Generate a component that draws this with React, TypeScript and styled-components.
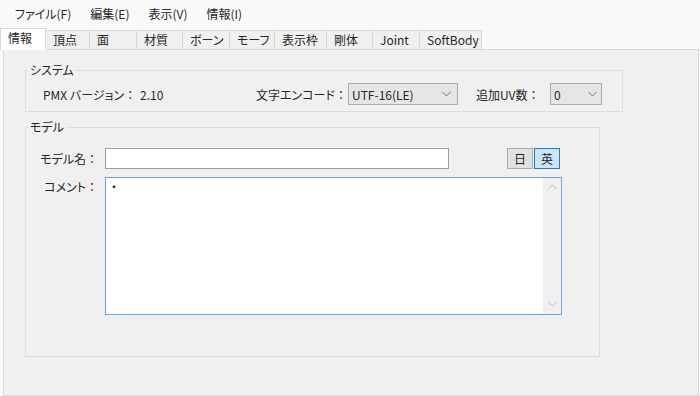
import React from 'react';
import styled, { createGlobalStyle } from 'styled-components';

const GlobalStyle = createGlobalStyle`
  html, body {
    margin: 0;
    padding: 0;
    background: #f9f9f9;
  }
  body {
    font-family: "Noto Sans CJK JP", "Noto Sans", sans-serif;
    font-size: 12px;
    color: #262626;
    font-feature-settings: "palt";
  }
`;

const Window = styled.div`
  width: 700px;
  height: 396px;
  display: flex;
  flex-direction: column;
  background: #f9f9f9;
  overflow: hidden;
`;

const MenuBar = styled.div`
  height: 28px;
  display: flex;
  align-items: center;
  padding-left: 5px;
`;

const MenuItem = styled.span`
  padding: 0 9px 0 10px;
  line-height: 20px;
`;

const TabStrip = styled.div`
  height: 21px;
  display: flex;
  align-items: flex-end;
`;

const Tab = styled.div<{ $w: number; $active?: boolean }>`
  box-sizing: border-box;
  width: ${(p) => p.$w}px;
  height: ${(p) => (p.$active ? 22 : 19)}px;
  margin-right: -1px;
  margin-bottom: ${(p) => (p.$active ? -1 : 0)}px;
  padding: ${(p) => (p.$active ? '1px 0 0 7px' : '1px 0 0 7px')};
  border: 1px solid #d9d9d9;
  border-bottom: none;
  background: ${(p) => (p.$active ? '#ffffff' : '#f0f0f0')};
  line-height: 16px;
  white-space: nowrap;
  position: relative;
  z-index: ${(p) => (p.$active ? 2 : 1)};
`;

const Panel = styled.div`
  flex: 1;
  box-sizing: border-box;
  width: 696px;
  margin-left: 3px;
  border: 1px solid #d9d9d9;
  background: #f0f0f0;
  padding: 12px 0 0 21px;
`;

const Group = styled.fieldset<{ $w: number; $gapTop?: number; $padBottom: number }>`
  box-sizing: border-box;
  width: ${(p) => p.$w}px;
  margin: ${(p) => p.$gapTop ?? 0}px 0 0 0;
  padding: 0 0 ${(p) => p.$padBottom}px 0;
  border: 1px solid #dcdcdc;
  min-width: 0;
`;

const Legend = styled.legend`
  margin-left: 2px;
  padding: 0 2px;
  line-height: 16px;
`;

const Colon = styled.span`
  font-feature-settings: normal;
`;

const SystemRow = styled.div`
  margin-top: 5px;
  height: 22px;
  padding-left: 17px;
  display: grid;
  grid-template-columns: 97px 116px 92px 110px 18px 74px 52px;
  align-items: center;
  white-space: nowrap;
`;

const Combo = styled.div<{ $padRight?: number }>`
  box-sizing: border-box;
  height: 22px;
  border: 1px solid #adadad;
  background: #e5e5e5;
  display: flex;
  align-items: center;
  justify-content: space-between;
  padding: 0 ${(p) => p.$padRight ?? 6}px 0 3px;
`;

const ModelGrid = styled.div`
  margin-top: 13px;
  display: grid;
  grid-template-columns: 72px 457px;
  column-gap: 7px;
  row-gap: 8px;
`;

const FieldLabel = styled.div<{ $top?: number }>`
  text-align: right;
  line-height: 16px;
  white-space: nowrap;
  padding-top: ${(p) => p.$top ?? 0}px;
  align-self: ${(p) => (p.$top !== undefined ? 'start' : 'center')};
`;

const NameLine = styled.div`
  display: flex;
  align-items: center;
  justify-content: space-between;
  padding-right: 2px;
`;

const TextBox = styled.div`
  box-sizing: border-box;
  width: 344px;
  height: 21px;
  border: 1px solid #9e9e9e;
  background: #ffffff;
`;

const LangButtons = styled.div`
  display: flex;
  gap: 1px;
`;

const LangButton = styled.div<{ $on?: boolean }>`
  box-sizing: border-box;
  width: 26px;
  height: 21px;
  display: flex;
  align-items: center;
  justify-content: center;
  border: 1px solid ${(p) => (p.$on ? '#2f77b8' : '#adadad')};
  background: ${(p) => (p.$on ? '#cce4f7' : '#e1e1e1')};
`;

const CommentBox = styled.div`
  box-sizing: border-box;
  height: 138px;
  border: 1px solid #66a6e6;
  background: #ffffff;
  display: flex;
`;

const CommentText = styled.div`
  flex: 1;
  padding: 1px 0 0 5px;
  line-height: 16px;
`;

const ScrollBar = styled.div`
  width: 18px;
  background: #f0f0f0;
  display: flex;
  flex-direction: column;
  justify-content: space-between;
  align-items: center;
  padding: 6px 0 7px;
`;

const Chevron = ({ up, color = '#707070' }: { up?: boolean; color?: string }) => (
  <svg width="9" height="6" viewBox="0 0 9 6">
    <path
      d={up ? 'M0.5 5 L4.5 1 L8.5 5' : 'M0.5 1 L4.5 5 L8.5 1'}
      fill="none"
      stroke={color}
      strokeWidth="1"
    />
  </svg>
);

const tabs = [
  { label: '情報', w: 46 },
  { label: '頂点', w: 45 },
  { label: '面', w: 48 },
  { label: '材質', w: 47 },
  { label: 'ボーン', w: 48 },
  { label: 'モーフ', w: 46 },
  { label: '表示枠', w: 53 },
  { label: '剛体', w: 47 },
  { label: 'Joint', w: 48 },
  { label: 'SoftBody', w: 63 },
];

export default function App() {
  return (
    <>
      <GlobalStyle />
      <Window>
        <MenuBar>
          <MenuItem>ファイル(F)</MenuItem>
          <MenuItem>編集(E)</MenuItem>
          <MenuItem>表示(V)</MenuItem>
          <MenuItem>情報(I)</MenuItem>
        </MenuBar>
        <TabStrip>
          {tabs.map((t, i) => (
            <Tab key={t.label} $w={t.w} $active={i === 0}>
              {t.label}
            </Tab>
          ))}
        </TabStrip>
        <Panel>
          <Group $w={598} $padBottom={6}>
            <Legend>システム</Legend>
            <SystemRow>
              <span>
                PMX バージョン<Colon>：</Colon>
              </span>
              <span>2.10</span>
              <span>
                文字エンコード<Colon>：</Colon>
              </span>
              <Combo>
                <span>UTF-16(LE)</span>
                <Chevron />
              </Combo>
              <span />
              <span>
                追加UV数<Colon>：</Colon>
              </span>
              <Combo $padRight={4}>
                <span>0</span>
                <Chevron />
              </Combo>
            </SystemRow>
          </Group>
          <Group $w={575} $gapTop={7} $padBottom={41}>
            <Legend>モデル</Legend>
            <ModelGrid>
              <FieldLabel>
                モデル名<Colon>：</Colon>
              </FieldLabel>
              <NameLine>
                <TextBox />
                <LangButtons>
                  <LangButton>日</LangButton>
                  <LangButton $on>英</LangButton>
                </LangButtons>
              </NameLine>
              <FieldLabel $top={2}>
                コメント<Colon>：</Colon>
              </FieldLabel>
              <CommentBox>
                <CommentText>・</CommentText>
                <ScrollBar>
                  <Chevron up color="#b4b4b4" />
                  <Chevron color="#b4b4b4" />
                </ScrollBar>
              </CommentBox>
            </ModelGrid>
          </Group>
        </Panel>
      </Window>
    </>
  );
}
